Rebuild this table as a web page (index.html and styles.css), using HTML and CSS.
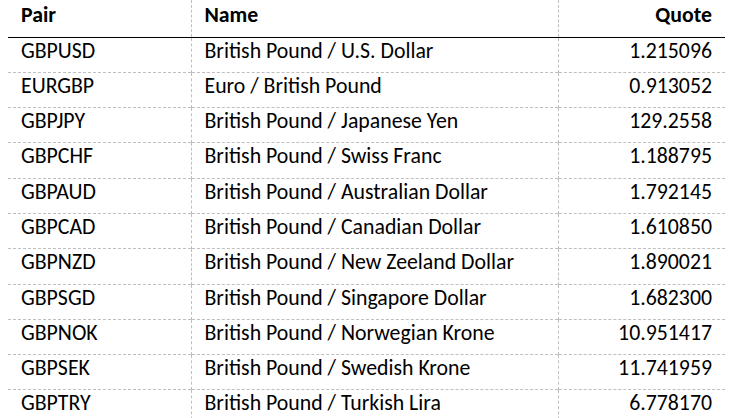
FILE: index.html
```html
<!DOCTYPE html>
<html>
<head>
<meta charset="utf-8">
<link rel="stylesheet" href="styles.css">
</head>
<body>
<table class="fx">
  <thead>
    <tr><th class="c-pair">Pair</th><th class="c-name">Name</th><th class="c-quote">Quote</th></tr>
  </thead>
  <tbody>
    <tr><td class="c-pair">GBPUSD</td><td class="c-name">British Pound / U.S. Dollar</td><td class="c-quote">1.215096</td></tr>
    <tr><td class="c-pair">EURGBP</td><td class="c-name">Euro / British Pound</td><td class="c-quote">0.913052</td></tr>
    <tr><td class="c-pair">GBPJPY</td><td class="c-name">British Pound / Japanese Yen</td><td class="c-quote">129.2558</td></tr>
    <tr><td class="c-pair">GBPCHF</td><td class="c-name">British Pound / Swiss Franc</td><td class="c-quote">1.188795</td></tr>
    <tr><td class="c-pair">GBPAUD</td><td class="c-name">British Pound / Australian Dollar</td><td class="c-quote">1.792145</td></tr>
    <tr><td class="c-pair">GBPCAD</td><td class="c-name">British Pound / Canadian Dollar</td><td class="c-quote">1.610850</td></tr>
    <tr><td class="c-pair">GBPNZD</td><td class="c-name">British Pound / New Zeeland Dollar</td><td class="c-quote">1.890021</td></tr>
    <tr><td class="c-pair">GBPSGD</td><td class="c-name">British Pound / Singapore Dollar</td><td class="c-quote">1.682300</td></tr>
    <tr><td class="c-pair">GBPNOK</td><td class="c-name">British Pound / Norwegian Krone</td><td class="c-quote">10.951417</td></tr>
    <tr><td class="c-pair">GBPSEK</td><td class="c-name">British Pound / Swedish Krone</td><td class="c-quote">11.741959</td></tr>
    <tr><td class="c-pair">GBPTRY</td><td class="c-name">British Pound / Turkish Lira</td><td class="c-quote">6.778170</td></tr>
  </tbody>
</table>
</body>
</html>
```
FILE: styles.css
```css
html, body {
  margin: 0;
  padding: 0;
  background: #fff;
}
body {
  padding: 0 8px;
  font-family: Carlito, Lato, "Liberation Sans", sans-serif;
  font-size: 21.8px;
  color: #000;
  overflow: hidden;
}
.fx {
  width: 717px;
  border-collapse: collapse;
  table-layout: fixed;
}
.fx th, .fx td {
  padding: 0;
  vertical-align: top;
  line-height: 26px;
  white-space: nowrap;
}
.fx th {
  height: 37px;
  padding-top: 2px;
  box-sizing: border-box;
  font-weight: bold;
  border-bottom: 1px solid #000;
  text-align: left;
}
.fx td {
  height: 35.3px;
  box-sizing: border-box;
  padding-top: 0;
  border-top: 1px dashed #bfbfbf;
}
.fx tbody tr:first-child td {
  border-top: none;
}
.c-pair {
  width: 183px;
  padding-left: 13px !important;
}
.c-name {
  width: 367px;
  padding-left: 13px !important;
  border-left: 1px dashed #bfbfbf;
}
.c-quote {
  width: 167px;
  padding-right: 13px !important;
  border-left: 1px dashed #bfbfbf;
  text-align: right !important;
}
```
